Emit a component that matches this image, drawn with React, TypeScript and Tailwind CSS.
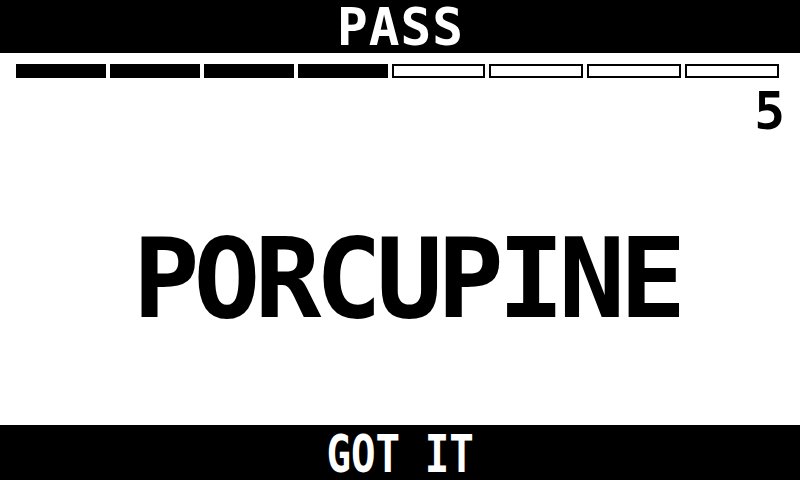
import React from "react";

const mono = { fontFamily: '"DejaVu Sans Mono", "Liberation Mono", monospace' };

const TOTAL = 8;
const DONE = 4;

export default function App() {
  return (
    <div className="w-[800px] h-[480px] bg-white flex flex-col overflow-hidden" style={mono}>
      <div className="h-[53px] bg-black flex items-center justify-center pt-[2px]">
        <span className="text-white font-bold text-[51px] leading-none tracking-[1px] pl-[1px]">PASS</span>
      </div>

      <div className="flex gap-1 pl-4 pr-[21px] pt-[11px]">
        {Array.from({ length: TOTAL }).map((_, i) => (
          <div
            key={i}
            className={
              i < DONE
                ? "flex-1 h-[14px] bg-black"
                : "flex-1 h-[14px] bg-white border-2 border-black"
            }
          />
        ))}
      </div>

      <div className="flex justify-end pr-[15px] pt-[8px]">
        <span className="text-black font-bold text-[51px] leading-none">5</span>
      </div>

      <div className="flex-1 flex items-center justify-center pl-[13px] pb-[5px]">
        <span className="text-black font-bold text-[111px] leading-none tracking-[-6px]">PORCUPINE</span>
      </div>

      <div className="h-[55px] bg-black flex items-center justify-center pt-[4px]">
        <span className="text-white font-bold text-[51px] leading-none inline-block scale-x-[0.8] whitespace-pre">GOT IT</span>
      </div>
    </div>
  );
}
